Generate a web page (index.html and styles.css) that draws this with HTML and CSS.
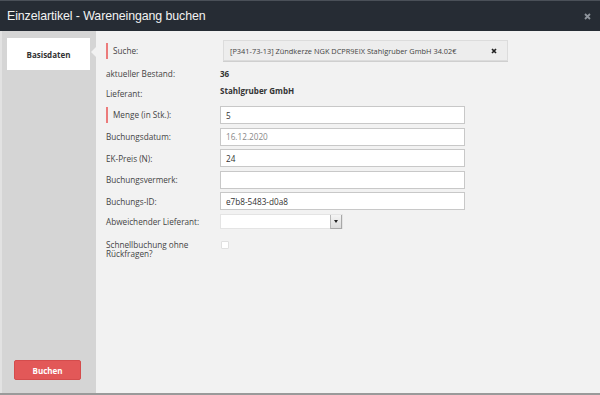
FILE: index.html
```html
<!DOCTYPE html>
<html lang="de">
<head>
  <meta charset="UTF-8" />
  <title>Einzelartikel - Wareneingang buchen</title>
  <link rel="stylesheet" href="styles.css">
</head>
<body>
  <div class="modal">
    <div class="modal-header">
      <div class="modal-title">Einzelartikel - Wareneingang buchen</div>
      <svg class="close" width="7" height="7" viewBox="0 0 7 7"><path d="M1 1L6 6M6 1L1 6" stroke="#8e949c" stroke-width="1.8"/></svg>
    </div>

    <div class="modal-body">
      <div class="sidebar">
        <div class="tab active">Basisdaten</div>
        <button class="btn-book">Buchen</button>
      </div>

      <div class="content">
        <div class="row row-search">
          <label class="required">Suche:</label>
          <div class="search-box">
            <span>[P341-73-13] Zündkerze NGK DCPR9EIX Stahlgruber GmbH 34.02€</span>
            <svg width="6" height="6" viewBox="0 0 6 6"><path d="M1 1L5 5M5 1L1 5" stroke="#222" stroke-width="1.7"/></svg>
          </div>
        </div>
        <div class="row row-text">
          <label>aktueller Bestand:</label>
          <div class="value">36</div>
        </div>
        <div class="row row-text row-supplier">
          <label>Lieferant:</label>
          <div class="value">Stahlgruber GmbH</div>
        </div>
        <div class="row row-input first">
          <label class="required">Menge (in Stk.):</label>
          <input type="text" value="5">
        </div>
        <div class="row row-input">
          <label>Buchungsdatum:</label>
          <input type="text" class="muted" value="16.12.2020">
        </div>
        <div class="row row-input">
          <label>EK-Preis (N):</label>
          <input type="text" value="24">
        </div>
        <div class="row row-input">
          <label>Buchungsvermerk:</label>
          <input type="text" value="">
        </div>
        <div class="row row-input">
          <label>Buchungs-ID:</label>
          <input type="text" value="e7b8-5483-d0a8">
        </div>
        <div class="row row-select">
          <label>Abweichender Lieferant:</label>
          <div class="select">
            <span class="select-arrow"></span>
          </div>
        </div>
        <div class="row row-check">
          <label>Schnellbuchung ohne Rückfragen?</label>
          <span class="checkbox"></span>
        </div>
      </div>
    </div>
  </div>
</body>
</html>
```

FILE: styles.css
```css
body {
  margin: 0;
  font-family: 'Open Sans', 'Liberation Sans', sans-serif;
  background: #f2f2f2;
  color: #333;
}
.modal {
  height: 395px;
  display: flex;
  flex-direction: column;
  border-bottom: 2px solid #9a9a9a;
  box-sizing: border-box;
}
.modal-header {
  height: 31px;
  background: #262c34;
  border-top: 1px solid #4a5058;
  box-sizing: border-box;
  display: flex;
  align-items: center;
  justify-content: space-between;
  padding: 0 9px 0 7px;
}
.modal-title {
  color: #f2f2f2;
  font-family: 'Liberation Sans', sans-serif;
  font-size: 12.4px;
  letter-spacing: -0.1px;
}
.close {
  margin-top: 1px;
}
.modal-body {
  flex: 1;
  display: flex;
}
.sidebar {
  width: 96px;
  background: #d5d5d5;
  border-left: 2px solid #e2e2e2;
  box-sizing: border-box;
  display: flex;
  flex-direction: column;
  align-items: flex-start;
  padding: 7px 0 13px 5px;
}
.tab {
  width: 83px;
  height: 32px;
  background: #fff;
  font-size: 8px;
  font-weight: bold;
  color: #333;
  display: flex;
  align-items: center;
  justify-content: center;
  position: relative;
}
.tab.active::after {
  content: "";
  position: absolute;
  right: -6px;
  top: 9px;
  border-style: solid;
  border-width: 5px 5px 5px 0;
  border-color: transparent #f2f2f2 transparent transparent;
}
.btn-book {
  margin: auto 0 0 7px;
  width: 67px;
  height: 20px;
  border: 1px solid #d44c4c;
  border-radius: 2px;
  background: #e25858;
  color: #fff;
  font-family: 'Open Sans', sans-serif;
  font-size: 8px;
  font-weight: bold;
}
.content {
  flex: 1;
  padding: 9px 0 0 10px;
}
.row {
  display: flex;
  align-items: center;
}
.row label {
  width: 114px;
  flex-shrink: 0;
  font-size: 8.2px;
  color: #444;
  box-sizing: border-box;
}
label.required {
  border-left: 2px solid #ec7b7b;
  padding-left: 5px;
  line-height: 16px;
}
.row-search {
  height: 21px;
}
.search-box {
  margin-left: 3px;
  width: 285px;
  height: 21px;
  box-sizing: border-box;
  background: #ededed;
  border: 1px solid #dcdcdc;
  box-shadow: 0 1px 0 #cfcfcf;
  display: flex;
  align-items: center;
  justify-content: space-between;
  padding: 0 10px 0 6px;
  font-size: 7.4px;
  color: #444;
}
.row-text {
  height: 20px;
  margin-top: 2px;
}
.row-supplier {
  height: 21px;
  margin-top: 0;
}
.value {
  font-size: 8px;
  font-weight: bold;
  color: #333;
}
.row-supplier .value {
  padding-bottom: 6px;
}
.row-input {
  margin-top: 3.5px;
}
.row-input.first {
  margin-top: 2px;
}
.row-input input {
  width: 245px;
  height: 18px;
  box-sizing: border-box;
  margin: 0;
  border: 1px solid #c8c8c8;
  background: #fff;
  padding: 0 5px;
  font-family: 'Open Sans', sans-serif;
  font-size: 8.2px;
  color: #333;
  outline: none;
}
.row-input input.muted {
  color: #888;
}
.row-select {
  margin-top: 4px;
}
.select {
  width: 123px;
  height: 15px;
  box-sizing: border-box;
  background: #fff;
  border: 1px solid #e4e4e4;
  display: flex;
  justify-content: flex-end;
}
.select-arrow {
  width: 10px;
  height: 13px;
  background: linear-gradient(#f4f4f4, #dcdcdc);
  border-left: 1px solid #b8b8b8;
  border-right: 1px solid #a8a8a8;
  border-bottom: 1px solid #a8a8a8;
  position: relative;
}
.select-arrow::after {
  content: "";
  position: absolute;
  left: 3px;
  top: 5px;
  border-style: solid;
  border-width: 3px 2px 0 2px;
  border-color: #222 transparent transparent transparent;
}
.row-check {
  margin-top: 11px;
  align-items: flex-start;
}
.row-check label {
  width: 101px;
  margin-right: 13px;
  line-height: 9px;
}
.checkbox {
  width: 8px;
  height: 8px;
  margin-left: 1px;
  margin-top: 1px;
  background: #fff;
  border: 1px solid #e0e0e0;
  box-sizing: border-box;
  border-radius: 1px;
}
```
